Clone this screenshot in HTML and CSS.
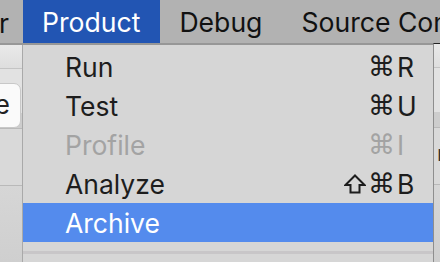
FILE: index.html
```html
<!doctype html>
<html lang="en">
  <head>
    <meta charset="UTF-8" />
    <title>Product menu</title>
    <link rel="stylesheet" href="styles.css">
  </head>
  <body>
    <div class="menubar">
      <span class="bar-item cut">r</span>
      <span class="bar-item active">Product</span>
      <span class="bar-item">Debug</span>
      <span class="bar-item">Source Control</span>
    </div>

    <div class="workspace">
      <div class="side left">
        <div class="toolbar"></div>
        <div class="button-row">
          <div class="side-button">e</div>
        </div>
        <div class="panel"></div>
        <div class="panel lower"></div>
      </div>

      <div class="menu">
        <div class="menu-item">
          <span class="label">Run</span>
          <span class="mods">⌘</span>
          <span class="key">R</span>
        </div>
        <div class="menu-item">
          <span class="label">Test</span>
          <span class="mods">⌘</span>
          <span class="key">U</span>
        </div>
        <div class="menu-item disabled">
          <span class="label">Profile</span>
          <span class="mods">⌘</span>
          <span class="key">I</span>
        </div>
        <div class="menu-item">
          <span class="label">Analyze</span>
          <span class="mods">
            <svg class="shift" viewBox="0 0 22 20" width="22" height="20">
              <path d="M11 1.5 L20.5 11 H15.5 V18.5 H6.5 V11 H1.5 Z" fill="none" stroke="currentColor" stroke-width="2" stroke-linejoin="miter" />
            </svg>⌘</span>
          <span class="key">B</span>
        </div>
        <div class="menu-item selected">
          <span class="label">Archive</span>
          <span class="mods"></span>
          <span class="key"></span>
        </div>
        <div class="separator"></div>
      </div>

      <div class="side right">
        <div class="toolbar"></div>
        <div class="button-row"></div>
        <div class="panel"><span class="frag">n</span></div>
        <div class="panel lower"></div>
      </div>
    </div>
  </body>
</html>
```

FILE: styles.css
```css
body {
  margin: 0;
  width: 440px;
  height: 262px;
  overflow: hidden;
  font-family: Inter, "Liberation Sans", sans-serif;
  background: #d6d6d6;
}
.menubar {
  display: flex;
  height: 43px;
  background: #b2b2b2;
  border-bottom: 2px solid #979797;
  font-size: 26.6px;
  color: #111;
  white-space: nowrap;
  overflow: hidden;
}
.bar-item {
  display: flex;
  align-items: center;
  padding: 0 20px 0 19px;
}
.bar-item.cut {
  width: 23px;
  flex-shrink: 0;
  box-sizing: border-box;
  justify-content: flex-end;
  padding: 0 14px 0 0;
  box-shadow: inset 0 -2px 0 #000;
  margin-bottom: -2px;
}
.bar-item.active {
  background: #2255b3;
  color: #fff;
}
.workspace {
  display: flex;
  height: 217px;
}
.side {
  display: flex;
  flex-direction: column;
  background: #d9d9d9;
  overflow: hidden;
}
.side.left {
  width: 22px;
  border-right: 1px solid #a9a9a9;
}
.side.right {
  width: 6px;
  border-left: 1px solid #8e8e8e;
  border-top: 1px solid #222;
  margin-top: -2px;
}
.toolbar {
  height: 23px;
  background: linear-gradient(#e9e9e9, #dedede);
  border-bottom: 1px solid #c4c4c4;
}
.button-row {
  height: 59px;
  padding-top: 14px;
  box-sizing: border-box;
  background: #e2e2e2;
  border-bottom: 15px solid #cdcdcd;
}
.side-button {
  width: 30px;
  height: 45px;
  margin-left: -9px;
  box-sizing: border-box;
  background: #fafafa;
  border: 1px solid #c8c8c8;
  border-radius: 7px;
  font-size: 26px;
  line-height: 42px;
  color: #222;
  text-align: right;
  padding-right: 10px;
}
.panel {
  height: 56px;
  background: #d9d9d9;
  border-top: 1px solid #b9b9b9;
  position: relative;
}
.panel.lower {
  flex: 1;
  background: linear-gradient(#d6d6d6, #cfcfcf);
}
.frag {
  position: absolute;
  left: 3px;
  top: 12px;
  font-size: 22px;
  color: #333;
}
.menu {
  width: 410px;
  padding-top: 2px;
  background: #d6d6d6;
  font-size: 26.5px;
}
.menu-item {
  display: grid;
  grid-template-columns: 1fr auto 20px;
  align-items: center;
  height: 39px;
  padding: 0 16px 0 42px;
  color: #1d1d1d;
}
.menu-item.disabled {
  color: #a3a3a3;
}
.menu-item.selected {
  background: #548bed;
  color: #fff;
}
.mods {
  display: flex;
  align-items: center;
  justify-content: flex-end;
  gap: 2px;
  font-family: "DejaVu Sans", sans-serif;
  font-size: 27px;
  padding-right: 2px;
}
.shift {
  display: block;
}
.key {
  text-align: left;
}
.separator {
  height: 3px;
  margin-top: 9px;
  background: #c8c6c8;
}
```
